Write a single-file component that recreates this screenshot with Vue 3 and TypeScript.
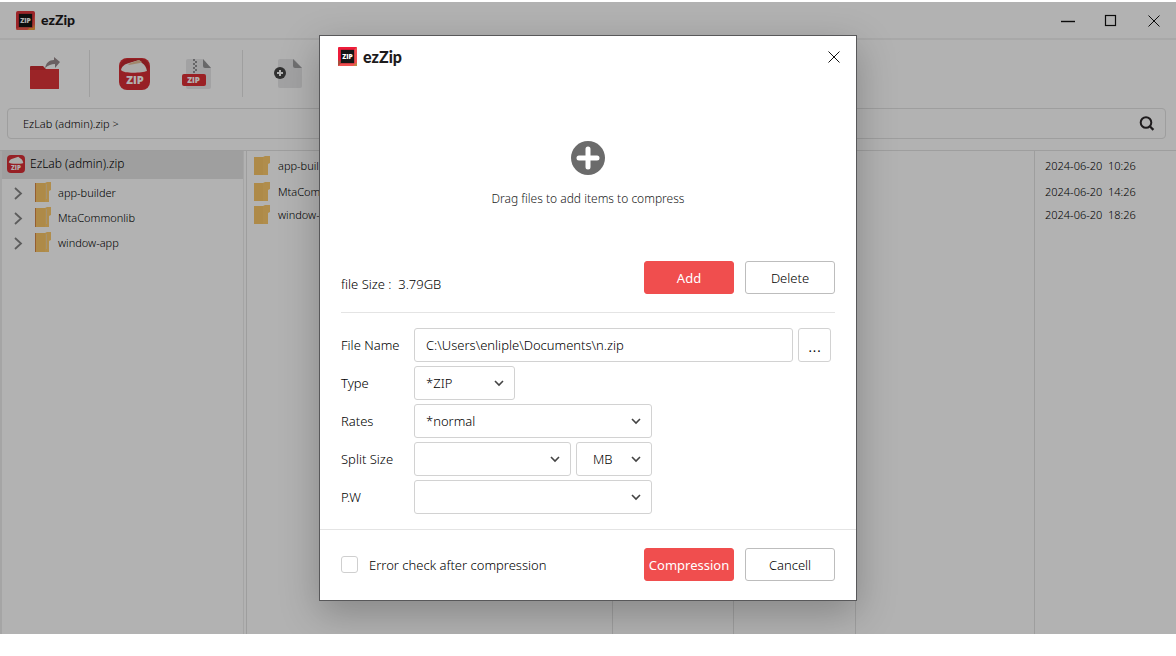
<script setup lang="ts">
import { ref } from 'vue'

interface FileRow {
  name: string
  date: string
}

const rows: FileRow[] = [
  { name: 'app-builder', date: '2024-06-20  10:26' },
  { name: 'MtaCommonlib', date: '2024-06-20  14:26' },
  { name: 'window-app', date: '2024-06-20  18:26' },
]

const fileName = ref('C:\\Users\\enliple\\Documents\\n.zip')
const type = ref('*ZIP')
const rate = ref('*normal')
const splitSize = ref('')
const splitUnit = ref('MB')
const password = ref('')
const errorCheck = ref(false)
</script>

<template>
  <div class="window">
    <header class="titlebar">
      <svg class="logo" viewBox="0 0 20 20" aria-hidden="true">
        <rect width="20" height="20" rx="2" fill="#e0353c" />
        <path d="M0 20 4 16h13l3-13v15a2 2 0 0 1-2 2z" fill="#f05a4c" />
        <path d="M12 20l2-2h4l1-4 1 4a2 2 0 0 1-2 2z" fill="#f2a13c" />
        <rect x="3" y="3" width="14" height="14" fill="#151515" />
        <text x="10" y="12.5" text-anchor="middle" class="logo-zip">ZIP</text>
      </svg>
      <span class="brand">ezZip</span>
      <div class="window-controls">
        <button type="button" aria-label="Minimize">
          <svg viewBox="0 0 14 14"><path d="M0 7.5h14" stroke="#111" stroke-width="1.4" /></svg>
        </button>
        <button type="button" aria-label="Maximize">
          <svg viewBox="0 0 14 14"><rect x="1.5" y="1.5" width="10" height="10" fill="none" stroke="#111" stroke-width="1.2" /></svg>
        </button>
        <button type="button" aria-label="Close window">
          <svg viewBox="0 0 14 14"><path d="M1.5 1.5l11 11M12.5 1.5l-11 11" stroke="#111" stroke-width="1" /></svg>
        </button>
      </div>
    </header>

    <nav class="toolbar" aria-label="Archive tools">
      <button type="button" class="tool-open" aria-label="Open">
        <svg width="32" height="34" viewBox="0 0 32 34">
          <path d="M1 10a1 1 0 0 1 1-1h12l3 3h12a1 1 0 0 1 1 1v18a1 1 0 0 1-1 1H2a1 1 0 0 1-1-1z" fill="#c92b30" />
          <path d="M1 13h15l2-1h12v19a1 1 0 0 1-1 1H2a1 1 0 0 1-1-1z" fill="#df3439" />
          <path d="M16 11c1-5 4-8 9-8V0l6 5-5 6V7c-4 0-6 1-10 4z" fill="#98898b" />
        </svg>
      </button>
      <button type="button" class="tool-zip" aria-label="Compress">
        <svg width="31" height="32" viewBox="0 0 31 32">
          <rect width="31" height="32" rx="8" fill="#d92f35" />
          <path d="M1 9c1-5 4-8 8-8h13c5 0 7 3 8 8l-1 4H2z" fill="#c22a2e" />
          <path d="M2 12C3 8 6 6 10 5l10-3 3 3c3 2 4 4 5 8-5 2-23 3-26-1z" fill="#f7f6f3" />
          <path d="M9 6l11-4 3 2-2 1-11 2z" fill="#e7c29a" />
          <text x="16" y="26" text-anchor="middle" class="big-zip">ZIP</text>
        </svg>
      </button>
      <button type="button" class="tool-extract" aria-label="Extract">
        <svg width="30" height="32" viewBox="0 0 30 32">
          <path d="M4 3a2 2 0 0 1 2-2h15l8 9v19a2 2 0 0 1-2 2H6a2 2 0 0 1-2-2z" fill="#e8e8ea" />
          <path d="M21 1l8 9h-6a2 2 0 0 1-2-2z" fill="#959597" />
          <path d="M11 2h2M13 4h2M11 6h2M13 8h2M11 10h2M13 12h2M11 14h2" stroke="#77777a" stroke-width="1.6" />
          <rect y="16" width="24" height="12" rx="2" fill="#df3036" />
          <text x="11.5" y="25" text-anchor="middle" class="file-zip">ZIP</text>
        </svg>
      </button>
      <button type="button" class="tool-add" aria-label="Add file">
        <svg width="29" height="32" viewBox="0 0 29 32">
          <path d="M4 3a2 2 0 0 1 2-2h14l8 9v18a2 2 0 0 1-2 2H6a2 2 0 0 1-2-2z" fill="#e8e8ea" />
          <path d="M19 1l9 9h-7a2 2 0 0 1-2-2z" fill="#a1a1a3" />
          <circle cx="6" cy="15" r="6" fill="#474747" />
          <path d="M6 12v6M3 15h6" stroke="#fff" stroke-width="2" />
        </svg>
      </button>
    </nav>

    <div class="pathbar">
      <span class="path">EzLab (admin).zip &gt;</span>
      <button type="button" aria-label="Search">
        <svg width="16" height="16" viewBox="0 0 16 16">
          <circle cx="7" cy="6.5" r="5.3" fill="none" stroke="#2c282a" stroke-width="2" />
          <path d="M11 10.5l3.4 3.4" stroke="#2c282a" stroke-width="2.2" />
        </svg>
      </button>
    </div>

    <main class="content">
      <aside class="sidebar">
        <div class="root">
          <svg width="18" height="18" viewBox="0 0 32 32" aria-hidden="true">
            <rect width="32" height="32" rx="7" fill="#d92f35" />
            <path d="M3 13C4 9 7 7 11 6l9-3 4 3c3 2 4 4 5 8-5 2-23 3-26-1z" fill="#f7f6f3" />
            <text x="16" y="27" text-anchor="middle" class="big-zip">ZIP</text>
          </svg>
          <span>EzLab (admin).zip</span>
        </div>
        <ul class="tree">
          <li v-for="row in rows" :key="row.name">
            <button type="button">
              <svg class="arrow" width="9" height="14" viewBox="0 0 9 14" aria-hidden="true">
                <path d="M1 2l6 5.5L1 13" fill="none" stroke="#858585" stroke-width="1.8" />
              </svg>
              <svg class="folder" width="16" height="21" viewBox="0 0 16 21" aria-hidden="true">
                <path d="M0 1h14v19H0z" fill="#fac668" />
                <path d="M10 1l2-1h4v8l-2 1v11h-4z" fill="#fdca6d" />
                <path d="M.5 1v19" stroke="#d78745" />
                <path d="M11.5 2v15" stroke="#ecd1a3" />
              </svg>
              {{ row.name }}
            </button>
          </li>
        </ul>
      </aside>

      <table class="files">
        <colgroup>
          <col class="c-name" />
          <col class="c-size" />
          <col class="c-type" />
          <col class="c-ratio" />
          <col />
        </colgroup>
        <tbody>
          <tr v-for="row in rows" :key="row.name">
            <td>
              <div class="file">
                <svg width="16" height="20" viewBox="0 0 16 20" aria-hidden="true">
                  <path d="M0 1h14v18H0z" fill="#fac668" />
                  <path d="M9 1l2-1h5v7l-2 1v11H9z" fill="#fdca6d" />
                </svg>
                {{ row.name }}
              </div>
            </td>
            <td></td>
            <td></td>
            <td></td>
            <td class="date">{{ row.date }}</td>
          </tr>
          <tr class="rest" aria-hidden="true">
            <td></td>
            <td></td>
            <td></td>
            <td></td>
            <td></td>
          </tr>
        </tbody>
      </table>
    </main>

    <div class="overlay">
      <form class="dialog" role="dialog" aria-label="ezZip" @submit.prevent>
        <header class="dialog-head">
          <svg class="logo" viewBox="0 0 20 20" aria-hidden="true">
            <rect width="20" height="20" rx="1" fill="#ed1c3a" />
            <path d="M0 20l3-3h14V3l3-3v20z" fill="#f05050" />
            <path d="M0 14l3 1v2l-3 3z" fill="#a6503c" />
            <path d="M16 20l4-4v4z" fill="#b98746" />
            <rect x="3" y="3" width="14" height="14" fill="#151515" />
            <text x="10" y="12.5" text-anchor="middle" class="logo-zip">ZIP</text>
          </svg>
          <span class="brand">ezZip</span>
          <button type="button" class="close" aria-label="Close">
            <svg width="14" height="14" viewBox="0 0 14 14">
              <path d="M1.5 1.5l11 11M12.5 1.5l-11 11" stroke="#111" stroke-width="1" />
            </svg>
          </button>
        </header>

        <section class="drop">
          <svg width="34" height="34" viewBox="0 0 34 34" aria-hidden="true">
            <circle cx="17" cy="17" r="17" fill="#6b6b6b" />
            <path d="M17 8v18M8 17h18" stroke="#fff" stroke-width="5" stroke-linecap="round" />
          </svg>
          <p>Drag files to add items to compress</p>
        </section>

        <section class="actions">
          <span class="size">file Size :&nbsp; 3.79GB</span>
          <button type="button" class="btn primary">Add</button>
          <button type="button" class="btn">Delete</button>
        </section>

        <section class="fields">
          <div class="field">
            <label for="file-name">File Name</label>
            <input id="file-name" v-model="fileName" type="text" />
            <button type="button" class="browse" aria-label="Browse">...</button>
          </div>
          <div class="field">
            <label for="type">Type</label>
            <div class="select w-type">
              <select id="type" v-model="type">
                <option>*ZIP</option>
              </select>
              <svg viewBox="0 0 10 7"><path d="M1 1l4 4 4-4" /></svg>
            </div>
          </div>
          <div class="field">
            <label for="rates">Rates</label>
            <div class="select w-full">
              <select id="rates" v-model="rate">
                <option>*normal</option>
              </select>
              <svg viewBox="0 0 10 7"><path d="M1 1l4 4 4-4" /></svg>
            </div>
          </div>
          <div class="field">
            <label for="split">Split Size</label>
            <div class="select w-split">
              <select id="split" v-model="splitSize">
                <option value=""></option>
              </select>
              <svg viewBox="0 0 10 7"><path d="M1 1l4 4 4-4" /></svg>
            </div>
            <div class="select w-unit">
              <select v-model="splitUnit" aria-label="Split size unit">
                <option>MB</option>
              </select>
              <svg viewBox="0 0 10 7"><path d="M1 1l4 4 4-4" /></svg>
            </div>
          </div>
          <div class="field">
            <label for="pw">P.W</label>
            <div class="select w-full">
              <select id="pw" v-model="password">
                <option value=""></option>
              </select>
              <svg viewBox="0 0 10 7"><path d="M1 1l4 4 4-4" /></svg>
            </div>
          </div>
        </section>

        <footer class="dialog-foot">
          <label class="check">
            <input v-model="errorCheck" type="checkbox" />
            Error check after compression
          </label>
          <button type="submit" class="btn primary">Compression</button>
          <button type="button" class="btn">Cancell</button>
        </footer>
      </form>
    </div>
  </div>
</template>

<style>
body {
  background: #fff;
}
</style>

<style scoped>
.window,
.window * {
  box-sizing: border-box;
}

.window {
  position: relative;
  display: flex;
  flex-direction: column;
  min-height: calc(100vh - 24px);
  margin: 2px 0 22px;
  overflow: hidden;
  background: #fff;
  color: #000;
  font: 300 11px/16px "Noto Sans", "Open Sans", sans-serif;
}

button {
  padding: 0;
  border: 0;
  background: none;
  color: inherit;
  font: inherit;
  cursor: pointer;
}

svg {
  display: block;
  flex: none;
}

.titlebar {
  display: flex;
  align-items: center;
  height: 38px;
  padding: 0 15px 0 16px;
  border-bottom: 2px solid #f1f1f1;
}

.logo {
  width: 19px;
  height: 19px;
}

.logo-zip {
  fill: #fff;
  font: 800 7px "Open Sans", sans-serif;
}

.brand {
  margin-left: 6px;
  color: #1d1b1c;
  font: 900 14px/20px Lato, sans-serif;
}

.window-controls {
  display: flex;
  gap: 29px;
  margin-left: auto;
  padding-top: 2px;
}

.window-controls svg {
  width: 14px;
  height: 14px;
}

.toolbar {
  display: flex;
  align-items: center;
  height: 47px;
  margin: 10px 0 11px 29px;
}

.tool-zip {
  display: flex;
  align-items: center;
  height: 47px;
  margin-left: 28px;
  padding-left: 29px;
  border-left: 1px solid #e4e4e4;
}

.tool-extract {
  margin-left: 32px;
}

.tool-add {
  display: flex;
  align-items: center;
  height: 47px;
  margin-left: 30px;
  padding-left: 31px;
  border-left: 1px solid #e4e4e4;
}

.big-zip {
  fill: #fff;
  font: 800 11px "Open Sans", sans-serif;
}

.file-zip {
  fill: #fff;
  font: 800 8px "Open Sans", sans-serif;
}

.pathbar {
  display: flex;
  align-items: center;
  justify-content: space-between;
  height: 31px;
  margin: 0 10px 11px 7px;
  padding: 0 10px 0 15px;
  border: 1px solid #e2e2e2;
  border-radius: 4px;
}

.content {
  display: flex;
  flex: 1;
  border-top: 1px solid #e2e2e2;
}

.sidebar {
  flex: none;
  width: 244px;
  border: solid #ececec;
  border-width: 0 1px 0 2px;
}

.root {
  display: flex;
  align-items: center;
  gap: 5px;
  height: 28px;
  padding: 0 5px 2px;
  background: #e4e4e4;
  font-size: 12px;
}

.tree {
  margin: 1px 0 0;
  padding: 0;
  list-style: none;
}

.tree button {
  display: flex;
  align-items: center;
  width: 100%;
  height: 25px;
  padding-left: 12px;
}

.arrow {
  margin-right: 12px;
}

.folder {
  margin-right: 7px;
}

.files {
  flex: 1;
  margin-left: 2px;
  border-collapse: collapse;
  table-layout: fixed;
}

.c-name {
  width: 366px;
}

.c-size {
  width: 121px;
}

.c-type {
  width: 122px;
}

.c-ratio {
  width: 179px;
}

.files tr {
  height: 23px;
}

.files .rest {
  height: auto;
}

.files td {
  padding: 0;
  border-left: 1px solid #e2e2e2;
}

.file {
  display: flex;
  align-items: center;
  gap: 8px;
  height: 23px;
  padding-left: 7px;
}

.files tr:first-child td {
  height: 29px;
}

.files .date {
  padding-left: 10px;
  white-space: pre;
}

.overlay {
  position: absolute;
  inset: 0;
  display: grid;
  place-items: center;
  background: rgba(0, 0, 0, 0.3);
}

.dialog {
  width: min(538px, 100%);
  border: 1px solid #58585a;
  background: #fff;
  box-shadow: 0 12px 36px rgba(0, 0, 0, 0.25);
  color: #000;
  font-size: 13px;
  line-height: 18px;
}

.dialog-head {
  display: flex;
  align-items: center;
  height: 42px;
  padding: 0 15px 1px 18px;
}

.dialog-head .brand {
  font-size: 16px;
}

.close {
  margin-left: auto;
}

.drop {
  display: flex;
  flex-direction: column;
  align-items: center;
  gap: 15px;
  padding: 63px 0 53px;
  color: #222;
  font-size: 12px;
}

.drop p {
  margin: 0;
}

.actions {
  display: flex;
  gap: 11px;
  margin: 0 21px;
  padding-bottom: 18px;
  border-bottom: 1px solid #e4e4e4;
}

.size {
  margin: 14px auto 0 0;
}

.btn {
  width: 90px;
  height: 33px;
  border: 1px solid #bdbdbd;
  border-radius: 3px;
  background: #fff;
}

.btn.primary {
  border-color: #f04e4e;
  background: #f04e4e;
  color: #fff;
  font-weight: 400;
}

.fields {
  display: grid;
  gap: 4px;
  padding: 15px 25px 15px 21px;
}

.field {
  display: flex;
  align-items: center;
  gap: 5px;
}

.field label {
  flex: none;
  width: 68px;
}

.field input,
.select select,
.browse {
  height: 34px;
  border: 1px solid #d2d2d2;
  border-radius: 3px;
  background: #fff;
  color: inherit;
  font: inherit;
}

.field input {
  flex: 1;
  min-width: 0;
  padding: 0 11px;
}

.field .browse {
  width: 33px;
  font-size: 18px;
}

.select {
  display: grid;
  align-items: center;
}

.select select,
.select svg {
  grid-area: 1 / 1;
}

.select select {
  width: 100%;
  padding: 0 11px;
  appearance: none;
}

.select svg {
  justify-self: end;
  width: 10px;
  height: 7px;
  margin-right: 11px;
  pointer-events: none;
}

.select path {
  fill: none;
  stroke: #444;
  stroke-width: 1.6;
}

.w-type {
  width: 101px;
}

.w-full {
  width: 238px;
}

.w-split {
  width: 157px;
}

.w-unit {
  width: 76px;
}

.w-unit select {
  padding-left: 16px;
}

.dialog-foot {
  display: flex;
  align-items: center;
  gap: 11px;
  padding: 18px 21px 19px;
  border-top: 1px solid #e4e4e4;
}

.check {
  display: flex;
  align-items: center;
  gap: 11px;
  margin-right: auto;
}

.check input {
  width: 17px;
  height: 17px;
  margin: 0;
  border: 1px solid #cfcfcf;
  border-radius: 3px;
  background: #fff;
  appearance: none;
}

.check input:checked {
  border-color: #f04e4e;
  background: #f04e4e;
}
</style>
